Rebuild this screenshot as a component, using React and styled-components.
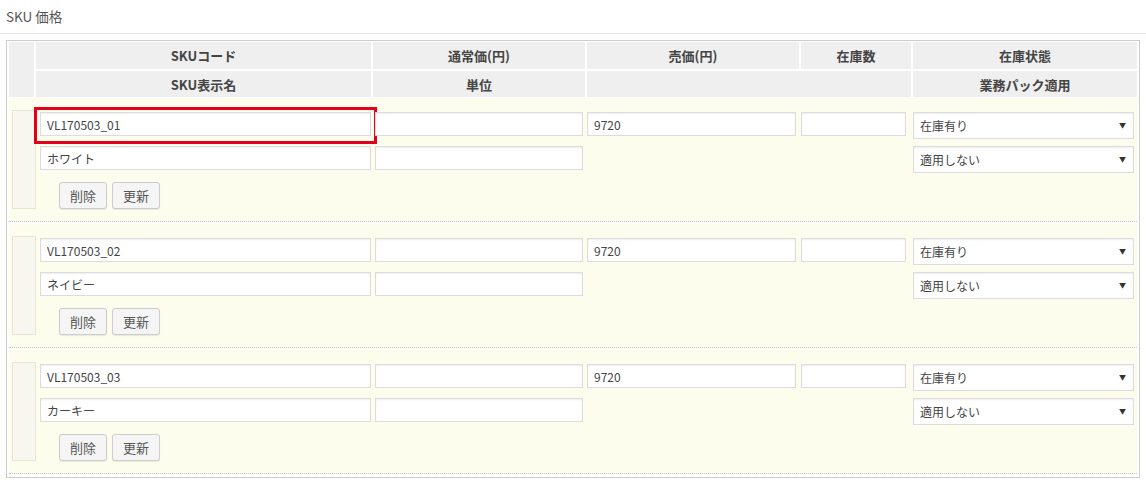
import React from 'react';
import styled, { createGlobalStyle } from 'styled-components';

const GlobalStyle = createGlobalStyle`
  html, body {
    margin: 0;
    padding: 0;
    background: #fff;
  }
  body {
    font-family: "Noto Sans CJK JP", "Noto Sans", sans-serif;
    color: #444;
  }
`;

const COLS = '25px 335px 212px 212px 110px 224px';

const Title = styled.div`
  height: 33px;
  line-height: 33px;
  padding-left: 6px;
  font-size: 13.5px;
  color: #555;
  border-bottom: 1px solid #e6e6e6;
`;

const Content = styled.div`
  padding: 6px 6px 0 6px;
`;

const TableBox = styled.div`
  border: 1px solid #ccc;
  padding: 1px 2px 3px 2px;
`;

const Header = styled.div`
  display: grid;
  grid-template-columns: ${COLS};
  grid-template-rows: 27px 26px;
  gap: 2px;
  margin-bottom: 1px;
`;

const HeadCell = styled.div`
  background: #efefef;
  font-size: 13px;
  font-weight: bold;
  color: #444;
  display: flex;
  align-items: center;
  justify-content: center;
  grid-row: ${(p) => p.$row || 'auto'};
  grid-column: ${(p) => p.$col || 'auto'};
`;

const Body = styled.div`
  display: flex;
  flex-direction: column;
  gap: 2px;
`;

const SkuRow = styled.div`
  display: grid;
  grid-template-columns: ${COLS};
  grid-template-rows: 29px 34px 36px;
  column-gap: 2px;
  padding: 12px 0;
  background: #fdfdee;
  border-bottom: 1px dotted #c8c8c8;
`;

const Marker = styled.div`
  grid-column: 1;
  grid-row: 1 / 4;
  margin-left: 3px;
  width: 24px;
  box-sizing: border-box;
  background: #f7f7ef;
  border: 1px solid #e6e6d6;
`;

const Cell = styled.div`
  grid-column: ${(p) => p.$col};
  grid-row: ${(p) => p.$row};
  position: relative;
  padding: ${(p) => p.$pad || '0'};
  margin-top: ${(p) => (p.$row === 1 ? '2px' : p.$row === 2 ? '7px' : '9px')};
  height: 27px;
  display: flex;
  align-items: flex-start;
  gap: 5px;
`;

const TextInput = styled.input`
  box-sizing: border-box;
  width: 100%;
  height: 24px;
  border: 1px solid #dcdcdc;
  box-shadow: inset 0 1px 2px rgba(0, 0, 0, 0.07);
  background: #fff;
  padding: 0 6px;
  font-family: "Noto Sans CJK JP", "Noto Sans", sans-serif;
  font-size: 12px;
  color: #444;
  outline: none;
`;

const Highlight = styled.div`
  position: absolute;
  top: -5px;
  left: -2px;
  right: -6px;
  bottom: -5px;
  border: 3px solid #e2001a;
  pointer-events: none;
`;

const SelectWrap = styled.div`
  position: relative;
  width: 100%;
  &::after {
    content: '▼';
    position: absolute;
    right: 8px;
    top: 8px;
    font-size: 7px;
    line-height: 10px;
    color: #333;
    pointer-events: none;
  }
`;

const Select = styled.select`
  appearance: none;
  -webkit-appearance: none;
  box-sizing: border-box;
  width: 100%;
  height: 27px;
  border: 1px solid #dcdcdc;
  box-shadow: inset 0 1px 2px rgba(0, 0, 0, 0.07);
  background: #fff;
  padding: 0 6px;
  font-family: "Noto Sans CJK JP", "Noto Sans", sans-serif;
  font-size: 12px;
  color: #444;
  border-radius: 0;
  outline: none;
`;

const Button = styled.button`
  box-sizing: border-box;
  width: 48px;
  height: 27px;
  border: 1px solid #ccc;
  border-radius: 3px;
  background: #f5f5f5;
  box-shadow: 0 1px 1px rgba(0, 0, 0, 0.08);
  font-family: "Noto Sans CJK JP", "Noto Sans", sans-serif;
  font-size: 13px;
  color: #555;
  padding: 0;
  cursor: pointer;
`;

const skus = [
  { code: 'VL170503_01', name: 'ホワイト', price: '9720', highlight: true },
  { code: 'VL170503_02', name: 'ネイビー', price: '9720' },
  { code: 'VL170503_03', name: 'カーキー', price: '9720' },
];

function Row({ sku }) {
  return (
    <SkuRow>
      <Marker />
      <Cell $col={2} $row={1} $pad="0 0 0 4px">
        <TextInput defaultValue={sku.code} />
        {sku.highlight && <Highlight />}
      </Cell>
      <Cell $col={3} $row={1} $pad="0 2px">
        <TextInput />
      </Cell>
      <Cell $col={4} $row={1} $pad="0 3px 0 0">
        <TextInput defaultValue={sku.price} />
      </Cell>
      <Cell $col={5} $row={1} $pad="0 5px 0 0">
        <TextInput />
      </Cell>
      <Cell $col={6} $row={1} $pad="0 3px 0 0">
        <SelectWrap>
          <Select defaultValue="在庫有り">
            <option>在庫有り</option>
            <option>在庫無し</option>
          </Select>
        </SelectWrap>
      </Cell>

      <Cell $col={2} $row={2} $pad="0 0 0 4px">
        <TextInput defaultValue={sku.name} />
      </Cell>
      <Cell $col={3} $row={2} $pad="0 2px">
        <TextInput />
      </Cell>
      <Cell $col={6} $row={2} $pad="0 3px 0 0">
        <SelectWrap>
          <Select defaultValue="適用しない">
            <option>適用しない</option>
            <option>適用する</option>
          </Select>
        </SelectWrap>
      </Cell>

      <Cell $col={2} $row={3} $pad="0 0 0 23px">
        <Button>削除</Button>
        <Button>更新</Button>
      </Cell>
    </SkuRow>
  );
}

export default function App() {
  return (
    <>
      <GlobalStyle />
      <Title>SKU 価格</Title>
      <Content>
        <TableBox>
          <Header>
            <HeadCell $row="1 / 3" $col="1" />
            <HeadCell $row="1" $col="2">SKUコード</HeadCell>
            <HeadCell $row="1" $col="3">通常価(円)</HeadCell>
            <HeadCell $row="1" $col="4">売価(円)</HeadCell>
            <HeadCell $row="1" $col="5">在庫数</HeadCell>
            <HeadCell $row="1" $col="6">在庫状態</HeadCell>
            <HeadCell $row="2" $col="2">SKU表示名</HeadCell>
            <HeadCell $row="2" $col="3">単位</HeadCell>
            <HeadCell $row="2" $col="4 / 6" />
            <HeadCell $row="2" $col="6">業務パック適用</HeadCell>
          </Header>
          <Body>
            {skus.map((s) => (
              <Row key={s.code} sku={s} />
            ))}
          </Body>
        </TableBox>
      </Content>
    </>
  );
}
